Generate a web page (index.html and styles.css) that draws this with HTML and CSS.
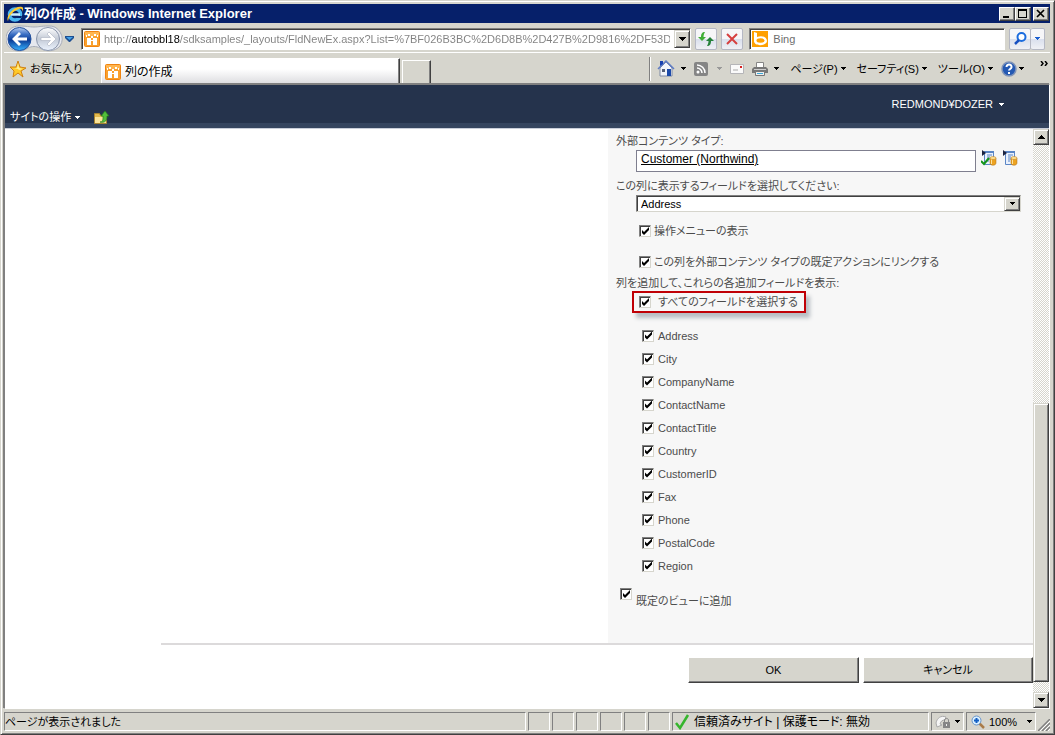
FILE: index.html
```html
<!DOCTYPE html>
<html lang="ja">
<head>
<meta charset="utf-8">
<title>列の作成 - Windows Internet Explorer</title>
<link rel="stylesheet" href="styles.css">
</head>
<body>
<svg class="defs" aria-hidden="true">
  <symbol id="site" viewBox="0 0 16 16"><rect x=".5" y=".5" width="15" height="15" rx="1" fill="#f9a02e" stroke="#f08410"/><path d="M1 1h14v4H1z" fill="#ffb650"/><path d="M4 3h2v2H4zM10 3h2v2h-2zM7 5h2v2H7z" fill="#fff"/><path d="M3 7h4v2h2V7h4v7h-4v-4H7v4H3z" fill="#fff"/><path d="M2 4h1v2H2zM13 4h1v2h-1z" fill="#fff"/></symbol>
  <symbol id="down" viewBox="0 0 7 4"><path d="M0 0h7v1H6v1H5v1H4v1H3V3H2V2H1V1H0z" fill="currentColor"/></symbol>
  <symbol id="caret" viewBox="0 0 5 3"><path d="M0 0h5v1H4v1H3v1H2V2H1V1H0z" fill="currentColor"/></symbol>
  <symbol id="entity" viewBox="0 0 16 16"><path d="M3.500 1.500h9v13h-9z" fill="#eaf1fc" stroke="#5b86c6"/><path d="M3 1h10v2H3z" fill="#5b86c6"/><path d="M6 5h5M6 7h3M6 9h3M6 11h2" stroke="#5b86c6"/><path d="M1 0v6l4-3z" fill="#1b2340"/><path d="M9 8v5c0 3 6 3 6 0V8z" fill="#eda321" stroke="#a86a10" stroke-width=".5"/><path d="M10 9h1v5h-1z" fill="#ffe29a"/><ellipse cx="12" cy="8" rx="3" ry="1.500" fill="#ffdf8e" stroke="#b87818" stroke-width=".5"/></symbol>
</svg>
<div class="window">
  <header class="titlebar">
    <svg class="i18" viewBox="0 0 18 18"><circle cx="9" cy="9.500" r="5.500" fill="none" stroke="#49b6f0" stroke-width="3.500"/><path d="M5 9.500h9" stroke="#c9efff" stroke-width="2.500"/><path d="M11 11h5l-1 2h-4z" fill="#06206a"/><path d="M2 16C-1 12 8 0 16 2c2 1 1 3 0 5 1-3-1-4-3-3C7 6 3 11 2 16z" fill="#fcc931"/></svg>
    <h1>列の作成 - Windows Internet Explorer</h1>
    <div class="wbuttons">
      <button class="wbtn" aria-label="最小化"><svg viewBox="0 0 12 10"><path d="M2 7h6v2H2z"/></svg></button>
      <button class="wbtn" aria-label="最大化"><svg viewBox="0 0 12 10"><path d="M1 0h9v9H1zM2 2v6h7V2z" fill-rule="evenodd"/></svg></button>
      <button class="wbtn close" aria-label="閉じる"><svg viewBox="0 0 12 10"><path d="M2 1l7 7M9 1L2 8" stroke="#000" stroke-width="1.700"/></svg></button>
    </div>
  </header>

  <div class="address-row">
    <div class="nav">
      <svg class="travel" viewBox="0 0 58 28">
        <defs><linearGradient id="bl" x1="0" y1="0" x2="0" y2="1"><stop offset="0" stop-color="#b9cdf0"/><stop offset=".3" stop-color="#3a6fc4"/><stop offset=".55" stop-color="#0d3c96"/><stop offset="1" stop-color="#36b2ff"/></linearGradient><linearGradient id="gr" x1="0" y1="0" x2="0" y2="1"><stop offset="0" stop-color="#fff"/><stop offset=".5" stop-color="#c3cad6"/><stop offset="1" stop-color="#edf4ff"/></linearGradient></defs>
        <path d="M13 1c8 0 10 1 15 1s7-1 14-1a13 13 0 0 1 12 20c-5 6-15 6-20 2-4-2-8-2-12 0C12 30 0 24 0 14 0 6 6 1 13 1z" fill="#e6e8ee" stroke="#a7acb8"/>
        <circle cx="13.500" cy="14" r="11.500" fill="url(#bl)" stroke="#24509c"/><path d="M6 14l7-7 2 2-3.500 3.500H21v3h-9.500L15 19l-2 2z" fill="#fff"/>
        <circle cx="42" cy="14" r="11.500" fill="url(#gr)" stroke="#8995ab"/><path d="M50 14l-7-7-2 2 3.500 3.500H35v3h9.500L41 19l2 2z" fill="#fff" stroke="#a9b0bf" stroke-width=".6"/>
      </svg>
      <svg class="recent" viewBox="0 0 9 6"><path d="M0 0h9v2L5 6H4L0 2z" fill="#1d4f91"/><path d="M1 1h7L4.500 4z" fill="#43a1e8"/></svg>
    </div>
    <div class="urlbox">
      <svg class="i16"><use href="#site"/></svg>
      <input class="url" type="text" aria-label="アドレス" value="http://autobbl18/sdksamples/_layouts/FldNewEx.aspx?List=%7BF026B3BC%2D6D8B%2D427B%2D9816%2DF53D">
      <button class="raised dropdown" aria-label="履歴"><svg class="down"><use href="#down"/></svg></button>
    </div>
    <button class="soft" aria-label="更新"><svg class="i18" viewBox="0 0 18 18"><path d="M8 2C5 2 4 4 4 7H1l4 4 4-4H6.500c0-2 .5-3 1.500-5z" fill="#3fae35"/><path d="M10 16c3 0 4-2 4-5h3l-4-4-4 4h2.500c0 2-.5 3-1.500 5z" fill="#26813a"/></svg></button>
    <button class="soft" aria-label="中止"><svg class="i18" viewBox="0 0 18 18"><path d="M4 4l10 10M14 4L4 14" stroke="#d64040" stroke-width="2"/></svg></button>
    <div class="searchbox">
      <svg class="i16" viewBox="0 0 16 16"><rect width="16" height="16" fill="#ffa000"/><path d="M2 1l3 1v4c5-2 10 0 10 4 0 5-13 6-13 0z" fill="#fff"/><ellipse cx="8.500" cy="9.500" rx="4" ry="2.200" fill="#ffa000"/></svg>
      <input type="text" aria-label="検索" placeholder="Bing">
    </div>
    <div class="searchbtns">
      <button class="soft" aria-label="検索実行"><svg class="i16" viewBox="0 0 16 16"><circle cx="9.500" cy="6" r="4" fill="#fff" stroke="#1b6cde" stroke-width="2"/><path d="M7 9l-4 4" stroke="#164fc0" stroke-width="2.500"/></svg></button>
      <button class="soft narrow" aria-label="検索オプション"><svg class="caret blue"><use href="#caret"/></svg></button>
    </div>
  </div>

  <div class="tab-row">
    <button class="flat fav"><svg class="i18" viewBox="0 0 18 18"><path d="M9 1l2 6 6 1-5 3 2 6-5-4-5 4 1-6-4-4 6 0z" fill="#ffc928" stroke="#cf8013"/><path d="M9 3l1 5 4 1-4 1-1-1-4-1h3z" fill="#fff099"/></svg>お気に入り</button>
    <button class="tab"><svg class="i16"><use href="#site"/></svg>列の作成</button>
    <button class="newtab" aria-label="新しいタブ"></button>
    <nav class="tools" aria-label="コマンド バー">
      <button class="flat" aria-label="ホーム"><svg class="i18" viewBox="0 0 18 18"><path d="M3 8l6-6 6 6v8H3z" fill="#f2f4fa" stroke="#7f8aa5"/><path d="M1 9l8-8 8 8" fill="none" stroke="#5f7cc4" stroke-width="1.500"/><path d="M3 1h3v3L3 6z" fill="#1740b0"/><path d="M10 9h4v7h-4z" fill="#1c4aaa"/><path d="M5 9h3v3H5z" fill="#57617a"/></svg><svg class="caret"><use href="#caret"/></svg></button>
      <button class="flat rss" aria-label="フィード"><svg class="i14" viewBox="0 0 14 14"><rect width="14" height="14" rx="2" fill="#858585"/><circle cx="4" cy="10" r="1.500" fill="#fff"/><path d="M3 6a5 5 0 0 1 5 5M3 3a8 8 0 0 1 8 8" fill="none" stroke="#fff" stroke-width="1.500"/></svg><svg class="caret dim"><use href="#caret"/></svg></button>
      <button class="flat" aria-label="メール"><svg class="i14" viewBox="0 0 14 14"><path d="M.5 2.500h13v9H.5z" fill="#fafafa" stroke="#b5b5b8"/><path d="M10 4h2v2h-2z" fill="#d82020"/><path d="M3 8h5" stroke="#aaa"/></svg></button>
      <button class="flat" aria-label="印刷"><svg class="i16" viewBox="0 0 16 16"><path d="M4.500 1.500h7V7h-7z" fill="#fff" stroke="#858585"/><path d="M2 6h12l2 2v4H0V8z" fill="#777"/><path d="M2 8h12v1H2z" fill="#ccc"/><path d="M3.500 10.500h9v4h-9z" fill="#eee" stroke="#777"/><path d="M5 12.500h6" stroke="#38a7d8"/></svg><svg class="caret"><use href="#caret"/></svg></button>
      <button class="flat word">ページ(P)<svg class="caret"><use href="#caret"/></svg></button>
      <button class="flat word">セーフティ(S)<svg class="caret"><use href="#caret"/></svg></button>
      <button class="flat word">ツール(O)<svg class="caret"><use href="#caret"/></svg></button>
      <button class="flat help" aria-label="ヘルプ"><svg class="i16" viewBox="0 0 16 16"><circle cx="8" cy="8" r="7" fill="#2459b3" stroke="#8094b8" stroke-width="1.500"/><path d="M5.500 6C5.500 2.500 11 3 10.500 6.200 10 8 8 8 8 9.500M8 11v2" fill="none" stroke="#fff" stroke-width="2"/></svg><svg class="caret"><use href="#caret"/></svg></button>
      <button class="flat more" aria-label="その他"><svg viewBox="0 0 8 5"><path d="M1 0l2 2.500L1 5M5 0l2 2.500L5 5" fill="none" stroke="#000" stroke-width="1.500"/></svg></button>
    </nav>
  </div>

  <div class="viewport">
    <div class="ribbon">
      <div class="site-actions">
        <button class="flat">サイトの操作<svg class="caret"><use href="#caret"/></svg></button>
        <a href="#" aria-label="上へ移動"><svg class="i16" viewBox="0 0 16 16"><path d="M.5 4.500h5l1 2h6v8H.5z" fill="#e4b94c" stroke="#a8842f"/><path d="M1 8h11v6H1z" fill="#fbe49a"/><path d="M6 13c3 0 3-2 3-6H7l4-5 4 5h-2c0 5-2 7-7 6z" fill="#53bd3b" stroke="#1f7d1b" stroke-width=".7"/></svg></a>
      </div>
      <button class="flat user">REDMOND¥DOZER<svg class="caret"><use href="#caret"/></svg></button>
    </div>
    <div class="scroller">
      <form class="page">
        <div class="section">
          <div class="panel">
            <label class="caption" for="ect">外部コンテンツ タイプ:</label>
            <div class="indent picker">
              <input id="ect" type="text" value="Customer (Northwind)">
              <button type="button" class="flat" aria-label="確認"><svg class="i16" viewBox="0 0 16 16"><use href="#entity"/><path d="M0 11l3 3 5-6" fill="none" stroke="#13951a" stroke-width="2"/></svg></button>
              <button type="button" class="flat" aria-label="参照"><svg class="i16"><use href="#entity"/></svg></button>
            </div>
            <label class="caption second" for="field">この列に表示するフィールドを選択してください:</label>
            <div class="indent selectwrap">
              <select id="field"><option>Address</option></select>
              <span class="raised arrow"><svg class="caret"><use href="#caret"/></svg></span>
            </div>
            <label class="check first"><input type="checkbox" checked>操作メニューの表示</label>
            <label class="check next"><input type="checkbox" checked>この列を外部コンテンツ タイプの既定アクションにリンクする</label>
            <p class="caption third">列を追加して、これらの各追加フィールドを表示:</p>
            <label class="all"><input type="checkbox" checked>すべてのフィールドを選択する</label>
            <ul class="fields">
              <li><label><input type="checkbox" checked>Address</label></li>
              <li><label><input type="checkbox" checked>City</label></li>
              <li><label><input type="checkbox" checked>CompanyName</label></li>
              <li><label><input type="checkbox" checked>ContactName</label></li>
              <li><label><input type="checkbox" checked>ContactTitle</label></li>
              <li><label><input type="checkbox" checked>Country</label></li>
              <li><label><input type="checkbox" checked>CustomerID</label></li>
              <li><label><input type="checkbox" checked>Fax</label></li>
              <li><label><input type="checkbox" checked>Phone</label></li>
              <li><label><input type="checkbox" checked>PostalCode</label></li>
              <li><label><input type="checkbox" checked>Region</label></li>
            </ul>
            <label class="view"><input type="checkbox" checked><span>既定のビューに追加</span></label>
          </div>
        </div>
        <div class="actions">
          <button type="button">OK</button>
          <button type="button">キャンセル</button>
        </div>
      </form>
      <div class="scrollbar">
        <button class="raised" aria-label="上へスクロール"><svg class="down up"><use href="#down"/></svg></button>
        <div class="track"><div class="raised thumb"></div></div>
        <button class="raised" aria-label="下へスクロール"><svg class="down"><use href="#down"/></svg></button>
      </div>
    </div>
  </div>

  <footer class="status">
    <div class="pane message">ページが表示されました</div>
    <div class="pane slot"></div><div class="pane slot"></div><div class="pane slot"></div><div class="pane slot"></div><div class="pane slot"></div><div class="pane slot"></div>
    <div class="pane zone"><svg class="i16" viewBox="0 0 16 16"><path d="M2 9l4 5L14 1" fill="none" stroke="#35b52c" stroke-width="2.500"/></svg>信頼済みサイト | 保護モード: 無効</div>
    <button class="pane lock" aria-label="プライバシー"><svg class="i16" viewBox="0 0 16 16"><path d="M1 9c1-5 5-8 10-6l-1 3c-3 0-4 1-5 4l2 1-5 2z" fill="#f5f5f5" stroke="#aaa"/><path d="M8 8h7v6H8z" fill="#868686"/><path d="M9.500 8V6c0-2 4-2 4 0v2" fill="none" stroke="#868686"/><path d="M11 10h1v2h-1z" fill="#eee"/></svg><svg class="caret"><use href="#caret"/></svg></button>
    <button class="pane zoom"><svg class="i14" viewBox="0 0 14 14"><path d="M8 8l5 5" stroke="#aa7c49" stroke-width="2.500"/><circle cx="5.500" cy="5.500" r="4.500" fill="#d8efff" stroke="#6a94c8"/><path d="M3 5.500h5M5.500 3v5" stroke="#125fc4" stroke-width="2"/></svg>100%<svg class="caret"><use href="#caret"/></svg></button>
    <svg class="grip" viewBox="0 0 12 12"><path d="M0 12L12 0M4 12l8-8M8 12l4-4" stroke="#808080" stroke-width="1.500"/><path d="M2 12L12 2M6 12l6-6M10 12l2-2" stroke="#fff"/></svg>
  </footer>
</div>
</body>
</html>
```

FILE: styles.css
```css
* { box-sizing: border-box; }
body {
  margin: 0;
  font: 11px/16px "Liberation Sans", "Noto Sans CJK JP", sans-serif;
  font-feature-settings: "palt";
  color: #000;
}
button, input, select { font: inherit; font-feature-settings: inherit; color: inherit; margin: 0; padding: 0; border-radius: 0; }
button { display: flex; align-items: center; justify-content: center; white-space: nowrap; }
input[type="text"] { border: 0; background: transparent; outline: 0; min-width: 0; }
svg { display: block; flex: none; }
.defs { display: none; }
.i18 { width: 18px; height: 18px; }
.i16 { width: 16px; height: 16px; }
.i14 { width: 14px; height: 14px; }
.down { width: 7px; height: 4px; }
.up { transform: rotate(180deg); }
.caret { width: 5px; height: 3px; }
.dim { color: #999; }
.blue { color: #1b5fd0; }
.flat { border: 0; background: transparent; gap: 6px; }
.raised {
  display: flex; align-items: center; justify-content: center;
  background: #d6d5cd;
  border: 1px solid;
  border-color: #d6d5cd #404040 #404040 #d6d5cd;
  box-shadow: inset 1px 1px #fff, inset -1px -1px #808080;
}

.window {
  min-height: 100vh;
  display: flex; flex-direction: column;
  padding: 2px 4px 1px 3px;
  background: #d6d5cd;
  border: 1px solid;
  border-color: #d6d5cd #404040 #404040 #d6d5cd;
  box-shadow: inset 1px 1px #fff, inset -1px -1px #808080;
}

.titlebar { display: flex; align-items: center; height: 19px; margin-top: 1px; padding: 0 1px 0 2px; background: #06206a; color: #fff; }
.titlebar h1 { flex: 1; margin: 0; font-size: 13px; font-weight: bold; }
.wbuttons { display: flex; }
.wbtn {
  width: 16px; height: 14px;
  background: #d6d5cd;
  border: 1px solid;
  border-color: #fff #404040 #404040 #fff;
  box-shadow: inset -1px -1px #808080;
}
.wbtn svg { width: 12px; height: 10px; }
.close { margin-left: 2px; }

.address-row { display: flex; align-items: center; gap: 4px; height: 28px; padding: 0 5px 0 2px; margin-top: 2px; border-bottom: 1px solid #fff; }
.nav { display: flex; align-items: center; gap: 1px; width: 71px; }
.travel { width: 58px; height: 28px; }
.recent { width: 9px; height: 6px; }
.urlbox, .searchbox {
  display: flex; align-items: center;
  height: 22px; padding-left: 2px;
  background: #fff;
  border: 1px solid;
  border-color: #808080 #fff #fff #808080;
  box-shadow: inset 1px 1px #404040;
}
.urlbox { flex: 612; gap: 4px; min-width: 0; }
.urlbox .url {
  flex: 1;
  color: transparent;
  background: linear-gradient(90deg, #808080 28px, #000 28px, #000 76px, #808080 76px) text;
}
.dropdown { width: 16px; height: 18px; }
.searchbox { flex: 254; gap: 5px; margin-left: 2px; }
.searchbox input { flex: 1; }
.searchbox input::placeholder { color: #6d6d6d; opacity: 1; }
.soft { width: 22px; height: 22px; border: 1px solid #b5b8c4; border-radius: 2px; background: linear-gradient(#f6f6f8 50%, #d9dfed 50%, #f0f1f5); }
.searchbtns { display: flex; }
.searchbtns .narrow { width: 14px; border-left: 0; }

.tab-row { display: flex; align-items: flex-end; height: 31px; padding-left: 5px; }
.fav { align-self: center; gap: 3px; width: 76px; justify-content: flex-start; }
.tab {
  width: 299px; height: 26px; margin-left: 16px; padding-left: 3px; gap: 4px;
  justify-content: flex-start;
  font-size: 12px;
  border: 1px solid;
  border-color: #fff #404040 transparent #fff;
  border-bottom: 0;
  box-shadow: inset -1px 0 #808080;
  background: linear-gradient(#fff 40%, #dcdcdf);
}
.newtab { width: 29px; height: 24px; margin-left: 2px; border: 1px solid; border-color: #fff #404040 #404040 #fff; border-bottom: 0; background: #d6d5cd; box-shadow: inset -1px 0 #808080; }
.tools { display: flex; align-items: center; align-self: center; gap: 8px; height: 24px; margin-left: auto; padding: 0 2px 0 7px; border-left: 1px solid #808080; box-shadow: inset 1px 0 #fff; }
.tools .rss { gap: 9px; }
.tools .word { gap: 3px; margin-left: 3px; }
.tools .help { gap: 2px; }
.more { align-self: flex-start; margin-left: 8px; padding-top: 4px; }
.more svg { width: 8px; height: 5px; }

.viewport { flex: 1; display: flex; flex-direction: column; border: 1px solid; border-color: #808080 #fff #fff #808080; box-shadow: -1px -1px #808080; background: #fff; }
.ribbon { display: flex; align-items: flex-start; justify-content: space-between; height: 44px; padding: 0 45px 0 5px; color: #fff; background: linear-gradient(#25334c 38px, #35455f 38px); border-bottom: 1px solid #c9ced9; }
.site-actions { display: flex; align-items: center; gap: 14px; padding-top: 24px; }
.site-actions .flat { gap: 4px; }
.user { padding-top: 11px; }

.scroller { flex: 1; display: flex; }
.page { flex: 1; padding-left: 156px; color: #4c4c4c; }
.section { display: grid; grid-template-columns: minmax(0, 1fr) 425px; border-bottom: 2px solid #dcdadb; }
.panel { grid-column: 2; display: flex; flex-direction: column; align-items: flex-start; padding: 4px 12px 34px 8px; background: #f7f7f7; }
.caption { margin: 0 0 1px; }
.second { margin-top: 6px; }
.third { margin: 3px 0 0; }
.indent { align-self: stretch; margin-left: 20px; color: #000; }
.picker { display: flex; align-items: flex-start; gap: 5px; margin-right: 3px; }
.picker input { flex: 1; height: 22px; padding: 0 4px 4px; border: 1px solid #7f7f8f; background: #fff; text-decoration: underline; font-size: 12px; }
.picker .flat { width: 16px; height: 16px; }
.selectwrap { display: grid; align-items: center; justify-items: end; }
.selectwrap > * { grid-area: 1 / 1; }
.selectwrap select { appearance: none; width: 100%; height: 17px; padding-left: 4px; background: #fff; border: 1px solid; border-color: #808080 #d6d5cd #d6d5cd #808080; box-shadow: inset 1px 1px #404040; outline: 0; }
.arrow { width: 16px; height: 14px; margin-right: 1px; pointer-events: none; }

input[type="checkbox"] {
  appearance: none; flex: none;
  display: grid; place-items: center;
  width: 12px; height: 12px;
  background: #fff;
  border: 1px solid;
  border-color: #808080 #d6d5cd #d6d5cd #808080;
  box-shadow: inset 1px 1px #404040;
}
input[type="checkbox"]:checked::before {
  content: "";
  width: 8px; height: 8px;
  background: #000;
  clip-path: polygon(1px 3px, 3px 5px, 8px 0, 8px 3px, 3px 8px, 1px 6px);
}
.check { display: flex; align-items: center; gap: 3px; height: 20px; margin-left: 23px; }
.first { margin-top: 9px; }
.next { margin-top: 11px; }
.all { display: flex; align-items: center; gap: 7px; height: 22px; margin-left: 16px; padding: 0 6px 0 5px; border: 2px solid #c00006; box-shadow: 4px 5px 4px #b9bec4; }
.fields { list-style: none; margin: 11px 0 0 26px; padding: 0; }
.fields label { display: flex; align-items: center; gap: 4px; height: 23px; }
.view { display: flex; align-items: flex-start; gap: 4px; margin: 11px 0 0 4px; }
.view span { padding-top: 5px; }
.actions { display: grid; grid-template-columns: 171px 170px; justify-content: end; gap: 4px; padding: 12px 0 20px; }
.actions button { height: 26px; color: #000; background: #d6d5cd; border: 1px solid; border-color: #fff #404040 #404040 #fff; box-shadow: inset -1px -1px #808080; }

.scrollbar { display: flex; flex-direction: column; width: 16px; }
.scrollbar button { width: 16px; height: 16px; }
.track { flex: 1; display: flex; flex-direction: column; justify-content: flex-end; padding-bottom: 10px; background: repeating-conic-gradient(#d6d5cd 0 25%, #fff 0 50%) 0 0 / 2px 2px; }
.thumb { height: 52%; }

.status { display: flex; gap: 2px; height: 19px; margin-top: 3px; margin-bottom: 2px; }
.pane { display: flex; align-items: center; border: 1px solid; border-color: #808080 #fff #fff #808080; background: transparent; }
.message { flex: 1; }
.slot { width: 22px; }
.zone { width: 257px; gap: 4px; padding-left: 1px; font-size: 12px; }
.lock { width: 33px; gap: 4px; }
.zoom { width: 70px; gap: 4px; justify-content: flex-start; padding-left: 4px; }
.zoom .caret { margin-left: 6px; }
.grip { width: 12px; height: 12px; align-self: flex-end; }
```
